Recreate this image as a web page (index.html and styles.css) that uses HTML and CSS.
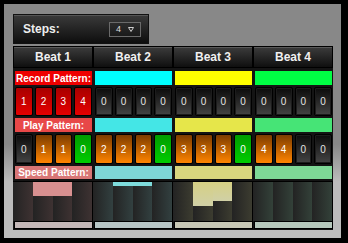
FILE: index.html
```html
<!DOCTYPE html>
<html>
<head>
  <meta charset="utf-8">
  <link rel="stylesheet" href="styles.css">
</head>
<body>
  <div class="frame">
    <div class="steps-bar">
      <span class="steps-label">Steps:</span>
      <div class="steps-select">
        <span>4</span>
        <svg width="6" height="5" viewBox="0 0 6 5"><polygon points="0.5,0.5 5.5,0.5 3,4.5" fill="none" stroke="#cfcfcf" stroke-width="1"/></svg>
      </div>
    </div>

    <div class="grid">
      <div class="row heads">
        <div class="beat-head">Beat 1</div>
        <div class="beat-head">Beat 2</div>
        <div class="beat-head">Beat 3</div>
        <div class="beat-head">Beat 4</div>
      </div>

      <!-- record -->
      <div class="row labels record">
        <div class="cell"><div class="tag">Record Pattern:</div></div>
        <div class="cell"><div class="tag b2"></div></div>
        <div class="cell"><div class="tag b3"></div></div>
        <div class="cell"><div class="tag b4"></div></div>
      </div>
      <div class="row buttons">
        <div class="cell">
          <div class="btn red">1</div><div class="btn red">2</div><div class="btn red">3</div><div class="btn red">4</div>
        </div>
        <div class="cell">
          <div class="btn off">0</div><div class="btn off">0</div><div class="btn off">0</div><div class="btn off">0</div>
        </div>
        <div class="cell">
          <div class="btn off">0</div><div class="btn off">0</div><div class="btn off">0</div><div class="btn off">0</div>
        </div>
        <div class="cell">
          <div class="btn off">0</div><div class="btn off">0</div><div class="btn off">0</div><div class="btn off">0</div>
        </div>
      </div>

      <!-- play -->
      <div class="row labels play">
        <div class="cell"><div class="tag">Play Pattern:</div></div>
        <div class="cell"><div class="tag b2"></div></div>
        <div class="cell"><div class="tag b3"></div></div>
        <div class="cell"><div class="tag b4"></div></div>
      </div>
      <div class="row buttons tall">
        <div class="cell">
          <div class="btn off">0</div><div class="btn orange">1</div><div class="btn orange">1</div><div class="btn green">0</div>
        </div>
        <div class="cell">
          <div class="btn orange">2</div><div class="btn orange">2</div><div class="btn orange">2</div><div class="btn green">0</div>
        </div>
        <div class="cell">
          <div class="btn orange">3</div><div class="btn orange">3</div><div class="btn orange">3</div><div class="btn green">0</div>
        </div>
        <div class="cell">
          <div class="btn orange">4</div><div class="btn orange">4</div><div class="btn off">0</div><div class="btn off">0</div>
        </div>
      </div>

      <!-- speed -->
      <div class="row labels speed">
        <div class="cell"><div class="tag">Speed Pattern:</div></div>
        <div class="cell"><div class="tag b2"></div></div>
        <div class="cell"><div class="tag b3"></div></div>
        <div class="cell"><div class="tag b4"></div></div>
      </div>
      <div class="row charts">
        <div class="chart b1">
          <div class="col"></div>
          <div class="col"><div class="fill" style="height:14px"></div></div>
          <div class="col"><div class="fill" style="height:14px"></div></div>
          <div class="col"></div>
        </div>
        <div class="chart b2">
          <div class="col"></div>
          <div class="col"><div class="fill" style="height:4px"></div></div>
          <div class="col"><div class="fill" style="height:4px"></div></div>
          <div class="col"></div>
        </div>
        <div class="chart b3">
          <div class="col"></div>
          <div class="col"><div class="fill" style="height:24px"></div></div>
          <div class="col"><div class="fill" style="height:19px"></div></div>
          <div class="col"></div>
        </div>
        <div class="chart b4">
          <div class="col"></div>
          <div class="col"></div>
          <div class="col"></div>
          <div class="col"></div>
        </div>
      </div>
      <div class="row foot">
        <div class="foot-bar b1"></div>
        <div class="foot-bar b2"></div>
        <div class="foot-bar b3"></div>
        <div class="foot-bar b4"></div>
      </div>
    </div>
  </div>
</body>
</html>
```

FILE: styles.css
```css
body {
  margin: 0;
  background: #000;
  font-family: "Liberation Sans", Arial, sans-serif;
}

.frame {
  margin: 4px 0 0 4px;
  width: 337px;
  height: 234px;
  box-sizing: border-box;
  padding: 10px 8px 0 9px;
  background: linear-gradient(#888 0%, #888 60%, #bcbcbc 76%, #bcbcbc 100%);
}

.steps-bar {
  width: 136px;
  height: 30px;
  box-sizing: border-box;
  display: flex;
  align-items: center;
  justify-content: space-between;
  padding: 0 7px 0 9px;
  border: 1px solid #111;
  background: linear-gradient(#3a3a3a, #0e0e0e);
  box-shadow: inset 0 1px 0 #555;
}

.steps-label {
  color: #eee;
  font-size: 12px;
  font-weight: bold;
}

.steps-select {
  width: 32px;
  height: 15px;
  box-sizing: border-box;
  display: flex;
  align-items: center;
  gap: 7px;
  padding-left: 6px;
  border: 1px solid #6a6a6a;
  background: linear-gradient(#2c2c2c, #1a1a1a);
  color: #ddd;
  font-size: 9px;
}

.grid {
  margin-top: 2px;
  width: 320px;
  background: #141414;
}

.row {
  display: grid;
  grid-template-columns: repeat(4, 80px);
}

.beat-head {
  height: 22px;
  box-sizing: border-box;
  display: flex;
  align-items: center;
  justify-content: center;
  border: 1px solid #000;
  background: linear-gradient(#3c3c3c, #0f0f0f);
  box-shadow: inset 0 1px 0 #5a5a5a;
  color: #f0f0f0;
  font-size: 12px;
  font-weight: bold;
}

.cell {
  padding: 0 1px 0 2px;
}

.labels {
  margin-top: 2px;
}

.labels.record {
  margin-top: 3px;
}

.tag {
  height: 14px;
  display: flex;
  align-items: center;
  justify-content: center;
  color: #fff;
  font-size: 10px;
  font-weight: bold;
}

.speed .tag {
  height: 13px;
}

.record .tag { background: #ee0000; }
.record .tag.b2 { background: #00ffff; }
.record .tag.b3 { background: #ffff00; }
.record .tag.b4 { background: #00ff44; }

.play .tag { background: #e84848; }
.play .tag.b2 { background: #44e6e6; }
.play .tag.b3 { background: #e6e64a; }
.play .tag.b4 { background: #46e476; }

.speed .tag { background: #d87676; }
.speed .tag.b2 { background: #7ed6d6; }
.speed .tag.b3 { background: #d8d67e; }
.speed .tag.b4 { background: #7ed896; }

.buttons {
  margin-top: 2px;
}

.buttons .cell {
  display: flex;
  gap: 2px;
  height: 29px;
}

.buttons.tall .cell {
  height: 30px;
}

.btn {
  flex: 1;
  display: flex;
  align-items: center;
  justify-content: center;
  border: 1px solid #000;
  border-radius: 2px;
  color: #e4e4e4;
  font-size: 10px;
}

.btn.off {
  background: linear-gradient(#0b0b0b, #444);
  box-shadow: inset 0 0 0 1px #1c1c1c;
}

.btn.red {
  background: linear-gradient(#a80000, #e60000);
  color: #fff;
}

.btn.orange {
  background: linear-gradient(#7c3c00, #ff8400);
  color: #fff;
}

.btn.green {
  background: linear-gradient(#009c00, #00cc00);
  color: #fff;
}

.charts {
  margin-top: 2px;
  border-top: 1px solid #000;
}

.chart {
  display: flex;
  height: 39px;
}

.chart .col {
  flex: 1;
  background: linear-gradient(to right, #232323, var(--tint));
}

.chart .col:last-child {
  border-right: 1px solid #000;
}

.chart.b1 { --tint: #3e3232; }
.chart.b2 { --tint: #324040; }
.chart.b3 { --tint: #3c3c30; }
.chart.b4 { --tint: #334139; }

.chart.b1 .fill { background: #d89090; }
.chart.b2 .fill { background: #7edcdc; }
.chart.b3 .fill { background: linear-gradient(#d6d084, #d0d0a6); }

.foot {
  padding-bottom: 1px;
}

.foot-bar {
  height: 6px;
  margin-left: 1px;
  border: 1px solid #000;
}

.foot-bar.b1 { background: #c4b8b8; }
.foot-bar.b2 { background: #b8c6c6; }
.foot-bar.b3 { background: #c8c8b6; }
.foot-bar.b4 { background: #b6c8bc; }
```
